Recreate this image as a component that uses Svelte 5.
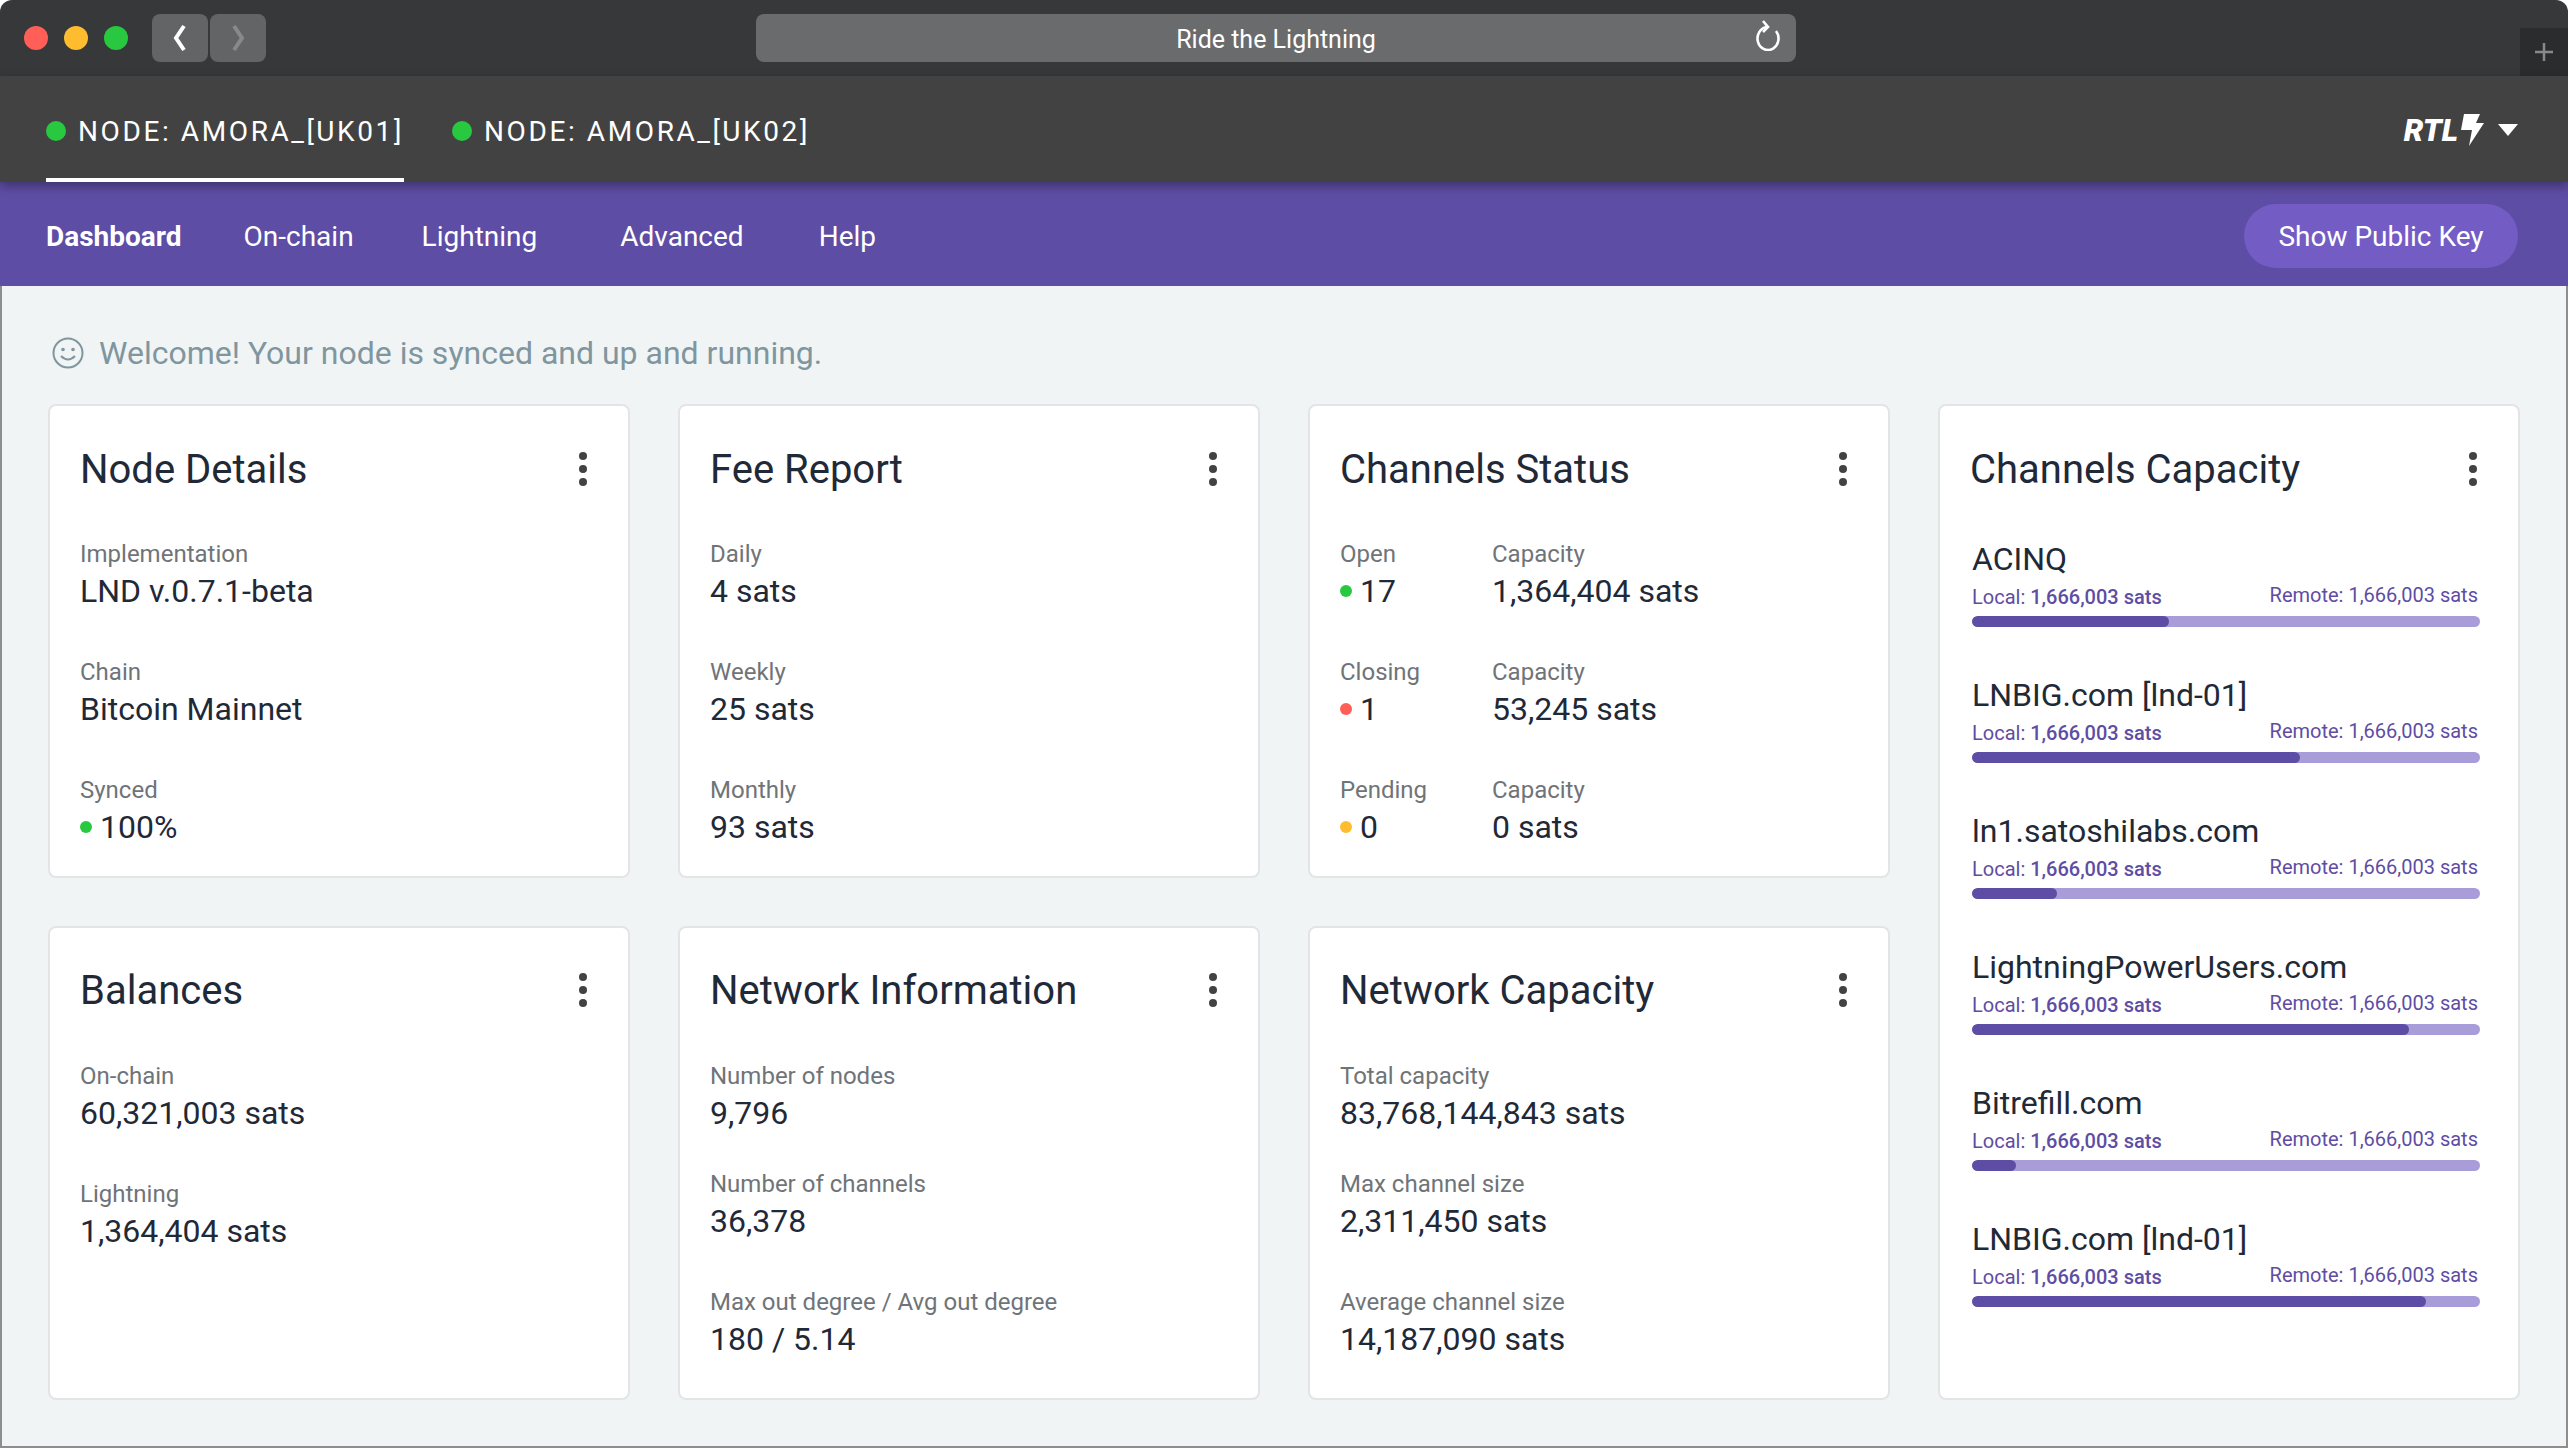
<script>
  const nodeCard = [
    { label: 'Implementation', value: 'LND v.0.7.1-beta' },
    { label: 'Chain', value: 'Bitcoin Mainnet' },
    { label: 'Synced', value: '100%', dot: 'green' }
  ];
  const feeCard = [
    { label: 'Daily', value: '4 sats' },
    { label: 'Weekly', value: '25 sats' },
    { label: 'Monthly', value: '93 sats' }
  ];
  const statusRows = [
    { label: 'Open', count: '17', dot: 'green', capacity: '1,364,404 sats' },
    { label: 'Closing', count: '1', dot: 'red', capacity: '53,245 sats' },
    { label: 'Pending', count: '0', dot: 'amber', capacity: '0 sats' }
  ];
  const balances = [
    { label: 'On-chain', value: '60,321,003 sats' },
    { label: 'Lightning', value: '1,364,404 sats' }
  ];
  const networkInfo = [
    { label: 'Number of nodes', value: '9,796' },
    { label: 'Number of channels', value: '36,378' },
    { label: 'Max out degree / Avg out degree', value: '180 / 5.14' }
  ];
  const networkCapacity = [
    { label: 'Total capacity', value: '83,768,144,843 sats' },
    { label: 'Max channel size', value: '2,311,450 sats' },
    { label: 'Average channel size', value: '14,187,090 sats' }
  ];
  const channels = [
    { name: 'ACINQ', pct: 38.7 },
    { name: 'LNBIG.com [lnd-01]', pct: 64.6 },
    { name: 'ln1.satoshilabs.com', pct: 16.8 },
    { name: 'LightningPowerUsers.com', pct: 86 },
    { name: 'Bitrefill.com', pct: 8.7 },
    { name: 'LNBIG.com [lnd-01]', pct: 89.4 }
  ];
</script>

{#snippet kebab()}
  <svg class="kebab" width="12" height="36" viewBox="0 0 12 36" aria-hidden="true">
    <circle cx="6" cy="5" r="4" />
    <circle cx="6" cy="18" r="4" />
    <circle cx="6" cy="31" r="4" />
  </svg>
{/snippet}

{#snippet head(title)}
  <div class="card-head">
    <h2>{title}</h2>
    {@render kebab()}
  </div>
{/snippet}

{#snippet stat(item)}
  <div class="label">{item.label}</div>
  <div class="value">
    {#if item.dot}<span class="dot {item.dot}"></span>{/if}{item.value}
  </div>
{/snippet}

<div class="window">
  <div class="titlebar">
    <div class="lights">
      <span class="light red"></span>
      <span class="light amber"></span>
      <span class="light green"></span>
    </div>
    <div class="arrows">
      <button class="arrow" aria-label="Back">
        <svg width="20" height="28" viewBox="0 0 20 28"><path d="M14 2 L6 14 L14 26" /></svg>
      </button>
      <button class="arrow off" aria-label="Forward">
        <svg width="20" height="28" viewBox="0 0 20 28"><path d="M6 2 L14 14 L6 26" /></svg>
      </button>
    </div>
    <div class="address">
      <span>Ride the Lightning</span>
      <svg class="reload" width="28" height="32" viewBox="0 0 28 32">
        <path d="M14 8 A10.5 11.5 0 1 0 23 12" />
        <path d="M10 2 L15 8 L10 13" />
      </svg>
    </div>
    <div class="newtab">
      <svg width="20" height="20" viewBox="0 0 20 20"><path d="M10 1 V19 M1 10 H19" /></svg>
    </div>
  </div>

  <div class="nodebar">
    <div class="nodetab active"><span class="dot big green"></span>NODE: AMORA_[UK01]</div>
    <div class="nodetab"><span class="dot big green"></span>NODE: AMORA_[UK02]</div>
    <div class="brand">
      <span class="logo">RTL</span>
      <svg class="bolt" width="26" height="32" viewBox="0 0 26 32"><path d="M6 0 H22 L18 9 H26 L11 32 L14 16 H3 Z" /></svg>
      <svg class="caret" width="20" height="12" viewBox="0 0 20 12"><path d="M0 0 H20 L10 12 Z" /></svg>
    </div>
  </div>

  <nav class="menu">
    <a class="current" href="#dashboard">Dashboard</a>
    <a class="m-chain" href="#chain">On-chain</a>
    <a class="m-light" href="#lightning">Lightning</a>
    <a class="m-adv" href="#advanced">Advanced</a>
    <a class="m-help" href="#help">Help</a>
    <button class="pubkey">Show Public Key</button>
  </nav>

  <main class="content">
    <p class="welcome">
      <svg width="32" height="32" viewBox="0 0 32 32">
        <circle class="face" cx="16" cy="16" r="14.5" />
        <circle class="eye" cx="11" cy="12.5" r="1.8" />
        <circle class="eye" cx="21" cy="12.5" r="1.8" />
        <path class="face" d="M9 19 Q16 26 23 19" />
      </svg>
      Welcome! Your node is synced and up and running.
    </p>

    <div class="grid">
      <section class="card">
        {@render head('Node Details')}
        {#each nodeCard as item}
          <div class="stat">{@render stat(item)}</div>
        {/each}
      </section>

      <section class="card">
        {@render head('Fee Report')}
        {#each feeCard as item}
          <div class="stat">{@render stat(item)}</div>
        {/each}
      </section>

      <section class="card">
        {@render head('Channels Status')}
        {#each statusRows as row}
          <div class="stat two">
            <div>{@render stat({ label: row.label, value: row.count, dot: row.dot })}</div>
            <div>{@render stat({ label: 'Capacity', value: row.capacity })}</div>
          </div>
        {/each}
      </section>

      <section class="card tall">
        {@render head('Channels Capacity')}
        <div class="channels">
          {#each channels as ch}
            <div class="channel">
              <div class="ch-name">{ch.name}</div>
              <div class="ch-sums">
                <span class="local">Local: <b>1,666,003 sats</b></span>
                <span class="remote">Remote: 1,666,003 sats</span>
              </div>
              <div class="track"><div class="fill" style="width: {ch.pct}%"></div></div>
            </div>
          {/each}
        </div>
      </section>

      <section class="card lower">
        {@render head('Balances')}
        {#each balances as item}
          <div class="stat">{@render stat(item)}</div>
        {/each}
      </section>

      <section class="card lower tight">
        {@render head('Network Information')}
        {#each networkInfo as item}
          <div class="stat">{@render stat(item)}</div>
        {/each}
      </section>

      <section class="card lower tight">
        {@render head('Network Capacity')}
        {#each networkCapacity as item}
          <div class="stat">{@render stat(item)}</div>
        {/each}
      </section>
    </div>
  </main>
</div>

<style>
  :global(body) {
    margin: 0;
    background: #fff;
  }

  .window {
    width: 2568px;
    height: 1448px;
    display: flex;
    flex-direction: column;
    overflow: hidden;
    font-family: Roboto, "Liberation Sans", sans-serif;
    border-radius: 12px 12px 0 0;
  }

  /* title bar */
  .titlebar {
    position: relative;
    height: 76px;
    flex: none;
    display: flex;
    align-items: flex-start;
    background: #37383a;
  }

  .lights {
    display: flex;
    gap: 16px;
    padding: 26px 0 0 24px;
  }

  .light {
    width: 24px;
    height: 24px;
    border-radius: 50%;
  }

  .light.red { background: #ff5f57; }
  .light.amber { background: #febc2e; }
  .light.green { background: #28c840; }

  .arrows {
    display: flex;
    gap: 2px;
    margin: 14px 0 0 24px;
  }

  .arrow {
    width: 56px;
    height: 48px;
    padding: 0;
    border: 0;
    border-radius: 8px;
    background: #636466;
    display: flex;
    align-items: center;
    justify-content: center;
  }

  .arrow svg path {
    fill: none;
    stroke: #fff;
    stroke-width: 4;
  }

  .arrow.off svg path {
    stroke: #88898a;
  }

  .address {
    position: absolute;
    left: 756px;
    top: 14px;
    width: 1040px;
    height: 48px;
    padding-top: 2px;
    box-sizing: border-box;
    border-radius: 8px;
    background: #6a6b6d;
    color: #fff;
    font-size: 25px;
    display: flex;
    align-items: center;
    justify-content: center;
  }

  .reload {
    position: absolute;
    right: 15px;
    top: 5px;
  }

  .reload path {
    fill: none;
    stroke: #fff;
    stroke-width: 2.6;
  }

  .newtab {
    position: absolute;
    right: 0;
    top: 28px;
    width: 48px;
    height: 48px;
    background: #2b2c2e;
    display: flex;
    align-items: center;
    justify-content: center;
  }

  .newtab path {
    stroke: #88898a;
    stroke-width: 2.5;
  }

  /* node bar */
  .nodebar {
    position: relative;
    z-index: 2;
    height: 106px;
    flex: none;
    display: flex;
    align-items: stretch;
    padding: 0 50px 0 46px;
    background: #424242;
    box-shadow: 0 4px 10px rgba(0, 0, 0, 0.35);
  }

  .nodetab {
    display: flex;
    align-items: center;
    width: 358px;
    margin-right: 48px;
    box-sizing: border-box;
    padding-top: 8px;
    border-bottom: 4px solid transparent;
    color: #fff;
    font-size: 28px;
    letter-spacing: 2.6px;
    white-space: nowrap;
  }

  .nodetab.active {
    border-bottom-color: #fff;
  }

  .brand {
    margin-left: auto;
    display: flex;
    align-items: center;
    padding-top: 2px;
    color: #fff;
  }

  .logo {
    font-size: 31px;
    font-weight: 900;
    font-style: italic;
  }

  .bolt {
    fill: #fff;
  }

  .caret {
    fill: #fff;
    margin-left: 14px;
  }

  /* purple menu */
  .menu {
    height: 104px;
    flex: none;
    display: flex;
    align-items: center;
    box-sizing: border-box;
    padding: 4px 50px 0 46px;
    background: #5e4da4;
  }

  .menu a {
    color: #fff;
    font-size: 28px;
    text-decoration: none;
  }

  .menu a.current { font-weight: 700; }
  .m-chain { margin-left: 62px; }
  .m-light { margin-left: 68px; }
  .m-adv { margin-left: 83px; }
  .m-help { margin-left: 75px; }

  .pubkey {
    margin-left: auto;
    width: 274px;
    height: 64px;
    border: 0;
    border-radius: 32px;
    background: #745cc5;
    color: #fff;
    font-family: inherit;
    font-size: 28px;
  }

  /* content */
  .content {
    flex: 1;
    box-sizing: border-box;
    padding: 0 46px;
    background: #f1f4f5;
    border: solid #8e8e8e;
    border-width: 0 2px 2px 2px;
  }

  .welcome {
    display: flex;
    align-items: center;
    gap: 15px;
    height: 118px;
    box-sizing: border-box;
    margin: 0;
    padding: 16px 0 0 4px;
    color: #7f969e;
    font-size: 32px;
  }

  .face {
    fill: none;
    stroke: #7f969e;
    stroke-width: 2;
  }

  .eye {
    fill: #7f969e;
  }

  .grid {
    display: grid;
    grid-template-columns: repeat(4, 582px);
    grid-template-rows: 474px 474px;
    gap: 48px;
  }

  .card {
    box-sizing: border-box;
    padding: 0 30px;
    background: #fff;
    border: 2px solid #e2e4e5;
    border-radius: 8px;
  }

  .tall {
    grid-column: 4;
    grid-row: 1 / span 2;
  }

  .card-head {
    display: flex;
    align-items: center;
    justify-content: space-between;
    height: 76px;
    margin-top: 25px;
    padding-right: 9px;
  }

  h2 {
    margin: 0;
    color: #1f2937;
    font-size: 40px;
    font-weight: 400;
  }

  .kebab {
    fill: #424242;
  }

  .stat {
    margin-top: 36px;
    height: 82px;
  }

  .stat.two {
    display: grid;
    grid-template-columns: 152px 1fr;
  }

  .card-head + .stat {
    margin-top: 32px;
  }

  .lower .card-head {
    margin-top: 24px;
  }

  .lower .card-head + .stat {
    margin-top: 33px;
  }

  .tight .stat:nth-of-type(3) {
    margin-top: 26px;
  }

  .label {
    color: #6f7478;
    font-size: 24px;
    line-height: 31px;
  }

  .value {
    display: flex;
    align-items: center;
    color: #1f2937;
    font-size: 32px;
    line-height: 42px;
  }

  .dot {
    width: 12px;
    height: 12px;
    margin-right: 8px;
    border-radius: 50%;
    flex: none;
  }

  .dot.big {
    width: 20px;
    height: 20px;
    margin-right: 12px;
  }

  .dot.green { background: #28c840; }
  .dot.red { background: #ff5f57; }
  .dot.amber { background: #febc2e; }

  .channels {
    margin-top: 30px;
    padding: 0 8px 0 2px;
  }

  .channel {
    height: 136px;
  }

  .ch-name {
    color: #1f2937;
    font-size: 32px;
    line-height: 44px;
  }

  .ch-sums {
    display: flex;
    justify-content: space-between;
    padding-right: 2px;
    height: 35px;
    color: #5e4da4;
    font-size: 20px;
    line-height: 32px;
  }

  .ch-sums b {
    font-weight: 500;
  }

  .remote {
    position: relative;
    top: -2px;
  }

  .track {
    height: 11px;
    border-radius: 6px;
    background: #a89dd8;
    overflow: hidden;
  }

  .fill {
    height: 100%;
    border-radius: 6px;
    background: #5e4da4;
  }
</style>
